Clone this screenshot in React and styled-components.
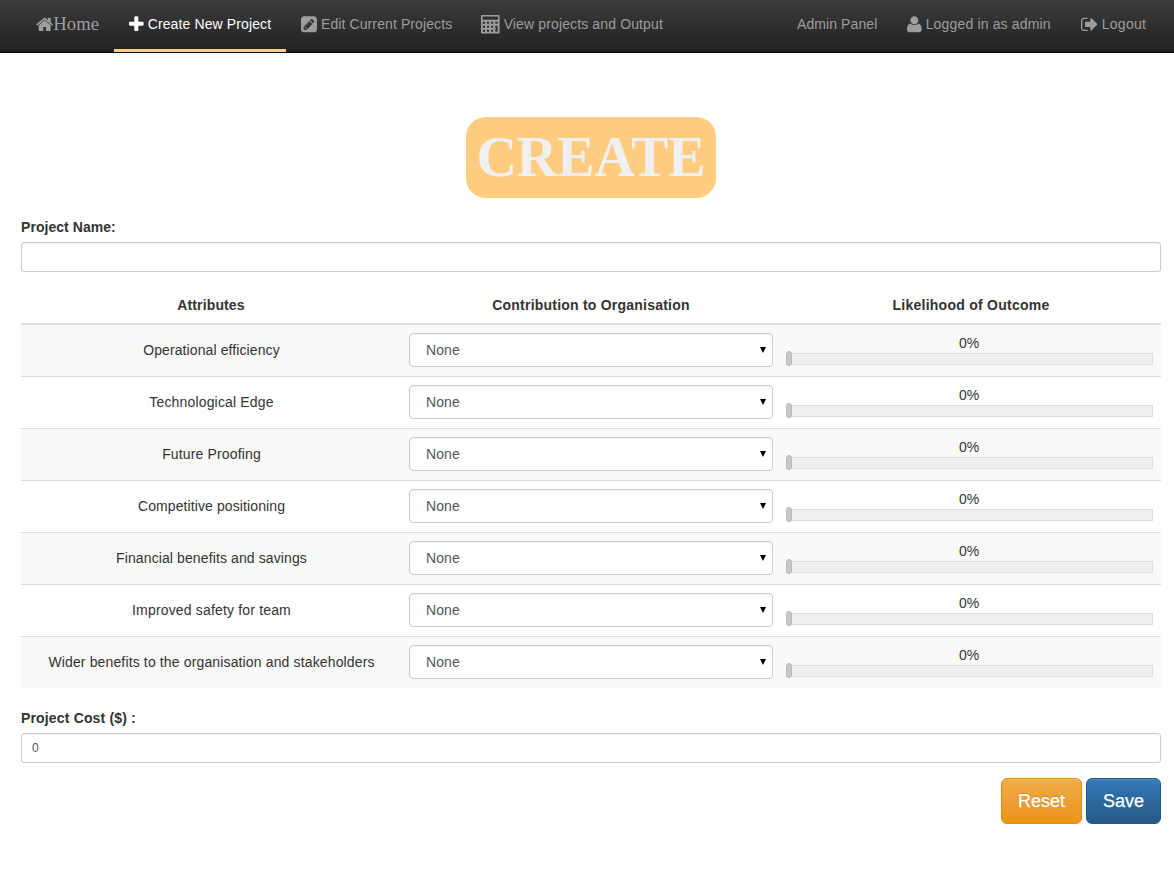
import React from "react";
import styled, { createGlobalStyle } from "styled-components";

const GlobalStyle = createGlobalStyle`
  *, *::before, *::after { box-sizing: border-box; }
  body {
    margin: 0;
    background: #fff;
    color: #333;
    font: 14px/20px "Liberation Sans", Arial, sans-serif;
  }
`;

const Navbar = styled.nav`
  display: flex;
  justify-content: space-between;
  height: 53px;
  padding: 0 13px 0 21px;
  background: linear-gradient(to bottom, #3c3c3c 0%, #222 100%);
  border-bottom: 1px solid #080808;
`;

const NavGroup = styled.div`
  display: flex;
`;

const NavLink = styled.a`
  display: flex;
  align-items: flex-start;
  width: ${(p) => p.$width}px;
  height: 52px;
  padding: 14px 0 0 15px;
  white-space: nowrap;
  color: ${(p) => (p.$active ? "#fff" : "#9d9d9d")};
  border-bottom: 3px solid ${(p) => (p.$active ? "#ffcc80" : "transparent")};
  letter-spacing: ${(p) => p.$spacing || 0}px;
`;

const Brand = styled(NavLink)`
  font-family: "Liberation Serif", "Times New Roman", serif;
  font-size: 18.67px;
`;

const Glyph = styled.svg`
  flex: none;
  height: 18.67px;
  width: ${(p) => p.$width}px;
  margin-top: 1px;
  margin-right: ${(p) => p.$gap}px;
  fill: currentColor;
`;

const ICONS = {
  home: {
    box: "64 0 1664 1792",
    width: 17.33,
    d: "M1472 992v480q0 26-19 45t-45 19h-384v-384h-256v384h-384q-26 0-45-19t-19-45v-480q0-1 .5-3t.5-3l575-474 575 474q1 2 1 6zm223-69l-62 74q-8 9-21 11h-3q-13 0-21-7l-692-577-692 577q-12 8-24 7-13-2-21-11l-62-74q-8-10-7-23.5t11-21.5l719-599q32-26 76-26t76 26l244 204v-195q0-14 9-23t23-9h192q14 0 23 9t9 23v408l219 182q10 8 11 21.5t-7 23.5z",
  },
  plus: {
    box: "192 0 1408 1792",
    width: 14.67,
    d: "M1600 736v192q0 40-28 68t-68 28h-416v416q0 40-28 68t-68 28h-192q-40 0-68-28t-28-68v-416h-416q-40 0-68-28t-28-68v-192q0-40 28-68t68-28h416v-416q0-40 28-68t68-28h192q40 0 68 28t28 68v416h416q40 0 68 28t28 68z",
  },
  edit: {
    box: "0 -128 1536 1792",
    width: 16,
    d: "M404 980l152 152-52 52h-56v-96h-96v-56zm414-390q14 13-3 30l-291 291q-17 17-30 3-14-13 3-30l291-291q17-17 30-3zm-274 690l544-544-288-288-544 544v288h288zm608-608l92-92q28-28 28-68t-28-68l-152-152q-28-28-68-28t-68 28l-92 92zm384-384v960q0 119-84.5 203.5t-203.5 84.5h-960q-119 0-203.5-84.5t-84.5-203.5v-960q0-119 84.5-203.5t203.5-84.5h960q119 0 203.5 84.5t84.5 203.5z",
  },
  user: {
    box: "0 0 1408 1792",
    width: 14.67,
    flip: true,
    d: "M1408 131q0-120-73-189.5t-194-69.5h-874q-121 0-194 69.5t-73 189.5q0 53 3.5 103.5t14 109 26.5 108.5 43 97.5 62 81 85.5 53.5 111.5 20q9 0 42-21.5t74.5-48 108-48 133.5-21.5 133.5 21.5 108 48 74.5 48 42 21.5q61 0 111.5-20t85.5-53.5 62-81 43-97.5 26.5-108.5 14-109 3.5-103.5zM1088 1024q0-159-112.5-271.5t-271.5-112.5-271.5 112.5-112.5 271.5 112.5 271.5 271.5 112.5 271.5-112.5 112.5-271.5z",
  },
  signOut: {
    box: "64 0 1600 1792",
    width: 16.67,
    d: "M704 1440q0 4 1 20t.5 26.5-3 23.5-10 19.5-20.5 6.5h-320q-119 0-203.5-84.5t-84.5-203.5v-704q0-119 84.5-203.5t203.5-84.5h320q13 0 22.5 9.5t9.5 22.5q0 4 1 20t.5 26.5-3 23.5-10 19.5-20.5 6.5h-320q-66 0-113 47t-47 113v704q0 66 47 113t113 47h312l11.5 1 11.5 3 8 5.5 7 9 2 13.5zm928-544q0 26-19 45l-544 544q-19 19-45 19t-45-19-19-45v-288h-448q-26 0-45-19t-19-45v-384q0-26 19-45t45-19h448v-288q0-26 19-45t45-19 45 19l544 544q19 19 19 45z",
  },
  calculator: {
    box: "0 0 18.67 18.67",
    width: 18.67,
    d: "M1.2 0h16.2q1.2 0 1.2 1.2v16.2q0 1.2-1.2 1.2h-16.2q-1.2 0-1.2-1.2v-16.2q0-1.2 1.2-1.2zM1.6 1.6v3.2h15.4v-3.2zM1.8 6.8v2h2.2v-2zM5.9 6.8v2h2.2v-2zM10.1 6.8v2h2.2v-2zM14.4 6.8v2h2.2v-2zM1.8 10.8v2h2.2v-2zM5.9 10.8v2h2.2v-2zM10.1 10.8v2h2.2v-2zM14.4 10.8v6h2.2v-6zM1.8 14.8v2h2.2v-2zM5.9 14.8v2h2.2v-2zM10.1 14.8v2h2.2v-2z",
  },
};

function Icon({ name, gap = 4 }) {
  const { box, width, d, flip } = ICONS[name];
  return (
    <Glyph viewBox={box} $width={width} $gap={gap} aria-hidden="true">
      <path
        d={d}
        fillRule={name === "calculator" ? "evenodd" : "nonzero"}
        transform={flip ? "translate(0 1536) scale(1 -1)" : undefined}
      />
    </Glyph>
  );
}

const Page = styled.main`
  display: flex;
  flex-direction: column;
  padding: 64px 13px 0 21px;
`;

const Title = styled.h1`
  align-self: center;
  width: 250px;
  height: 81px;
  margin: 0 0 19px;
  border-radius: 20px;
  background: #ffcc80;
  color: #f0f0f0;
  font: bold 56px/81px "Liberation Serif", "Times New Roman", serif;
  text-align: center;
`;

const Label = styled.label`
  height: 20px;
  margin-bottom: 5px;
  font-weight: bold;
  letter-spacing: ${(p) => p.$spacing || 0}px;
`;

const TextInput = styled.input`
  width: 100%;
  height: 30px;
  padding: 5px 10px;
  border: 1px solid #ccc;
  border-radius: 3px;
  background: #fff;
  box-shadow: inset 0 1px 1px rgba(0, 0, 0, 0.05);
  color: #555;
  font: 12px/18px "Liberation Sans", Arial, sans-serif;
`;

const Table = styled.section`
  margin: 15px 0 20px;
`;

const HeaderRow = styled.div`
  display: grid;
  grid-template-columns: repeat(3, 1fr);
  height: 38px;
  padding-top: 8px;
  border-bottom: 2px solid #ddd;
  font-weight: bold;
  text-align: center;
`;

const HeaderCell = styled.div`
  letter-spacing: ${(p) => p.$spacing || 0}px;
`;

const Row = styled.div`
  display: grid;
  grid-template-columns: repeat(3, 1fr);
  height: 52px;
  border-top: 1px solid #ddd;
  &:nth-child(even) { background: #f9f9f9; }
  &:nth-child(2) { height: 51px; border-top: 0; }
`;

const Attribute = styled.div`
  padding: 15px 0 0 1px;
  text-align: center;
  letter-spacing: ${(p) => p.$spacing || 0}px;
`;

const SelectCell = styled.div`
  position: relative;
  padding: 8px;
`;

const Select = styled.select`
  display: block;
  appearance: none;
  width: 364px;
  height: 34px;
  padding: 6px 16px;
  border: 1px solid #ccc;
  border-radius: 4px;
  background: #fff;
  box-shadow: inset 0 1px 1px rgba(0, 0, 0, 0.05);
  color: #555;
  font: 14px/20px "Liberation Sans", Arial, sans-serif;
  letter-spacing: 0.1px;
`;

const Arrow = styled.svg`
  position: absolute;
  right: 15px;
  top: 22px;
  width: 6px;
  height: 6px;
`;

const SliderCell = styled.div`
  padding: 8px 8px 0 6px;
`;

const Percent = styled.div`
  height: 20px;
  padding-right: 2px;
  text-align: center;
`;

const Track = styled.div`
  display: flex;
  height: 12px;
  border: 1px solid #ddd;
  background: #f0eeee;
`;

const Handle = styled.div`
  flex: none;
  width: 6px;
  height: 15px;
  margin: -3px 0 0 -2px;
  border: 1px solid #b8b8b8;
  border-radius: 3px;
  background: #c8c8c8;
`;

const Actions = styled.div`
  display: flex;
  justify-content: flex-end;
  gap: 4px;
  margin-top: 15px;
`;

const Button = styled.button`
  width: ${(p) => p.$width}px;
  height: 46px;
  padding: 0;
  border: 1px solid ${(p) => p.$edge};
  border-radius: 6px;
  background: linear-gradient(to bottom, ${(p) => p.$from} 0%, ${(p) => p.$to} 100%);
  box-shadow: inset 0 1px 0 rgba(255, 255, 255, 0.15), 0 1px 1px rgba(0, 0, 0, 0.075);
  color: #fff;
  font: 18px/24px "Liberation Sans", Arial, sans-serif;
  -webkit-text-stroke: 0.25px #fff;
  text-shadow: 0 -1px 0 rgba(0, 0, 0, 0.2);
`;

const ATTRIBUTES = [
  ["Operational efficiency", 0.1],
  ["Technological Edge", 0.17],
  ["Future Proofing", 0.15],
  ["Competitive positioning", 0.1],
  ["Financial benefits and savings", 0.11],
  ["Improved safety for team", 0.17],
  ["Wider benefits to the organisation and stakeholders", 0.14],
];

export default function App() {
  return (
    <>
      <GlobalStyle />
      <Navbar>
        <NavGroup>
          <Brand $width={93}><Icon name="home" gap={0} />Home</Brand>
          <NavLink $width={171.5} $spacing={0.12} $active><Icon name="plus" />Create New Project</NavLink>
          <NavLink $width={180.5} $spacing={0.1}><Icon name="edit" gap={4.5} />Edit Current Projects</NavLink>
          <NavLink $width={212} $spacing={0.13}><Icon name="calculator" />View projects and Output</NavLink>
        </NavGroup>
        <NavGroup>
          <NavLink $width={110} $spacing={0.09}>Admin Panel</NavLink>
          <NavLink $width={174} $spacing={0.16}><Icon name="user" />Logged in as admin</NavLink>
          <NavLink $width={95} $spacing={0.3}><Icon name="signOut" />Logout</NavLink>
        </NavGroup>
      </Navbar>
      <Page>
        <Title>CREATE</Title>
        <Label htmlFor="name" $spacing={0.05}>Project Name:</Label>
        <TextInput id="name" />
        <Table>
          <HeaderRow>
            <HeaderCell $spacing={0.13}>Attributes</HeaderCell>
            <HeaderCell $spacing={0.22}>Contribution to Organisation</HeaderCell>
            <HeaderCell $spacing={0.26}>Likelihood of Outcome</HeaderCell>
          </HeaderRow>
          {ATTRIBUTES.map(([name, spacing]) => (
            <Row key={name}>
              <Attribute $spacing={spacing}>{name}</Attribute>
              <SelectCell>
                <Select aria-label={name}><option>None</option></Select>
                <Arrow viewBox="0 0 6 6"><path d="M0 0h6L3 6z" /></Arrow>
              </SelectCell>
              <SliderCell>
                <Percent>0%</Percent>
                <Track><Handle /></Track>
              </SliderCell>
            </Row>
          ))}
        </Table>
        <Label htmlFor="cost" $spacing={0.16}>Project Cost ($) :</Label>
        <TextInput id="cost" defaultValue="0" />
        <Actions>
          <Button $width={81} $from="#f0ad4e" $to="#eb9316" $edge="#e38d13">Reset</Button>
          <Button $width={75} $from="#337ab7" $to="#265a88" $edge="#245580">Save</Button>
        </Actions>
      </Page>
    </>
  );
}
